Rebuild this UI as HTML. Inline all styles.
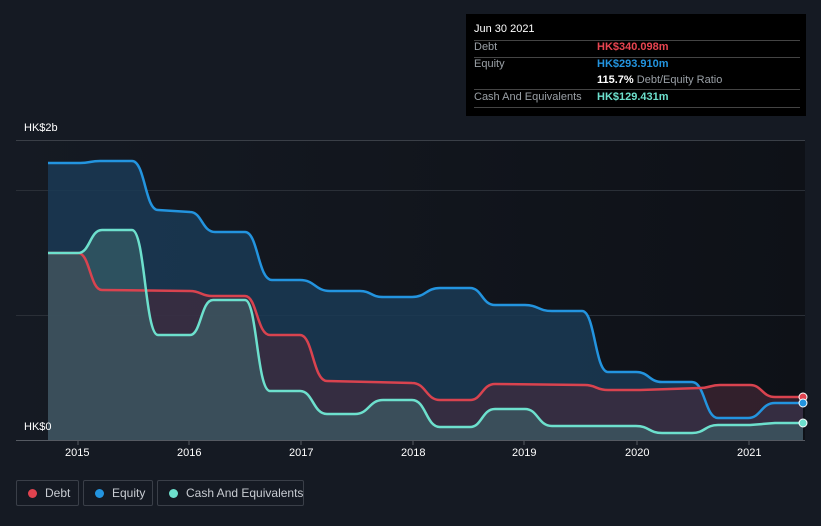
<!DOCTYPE html>
<html><head><meta charset="utf-8"><style>
body{margin:0;width:821px;height:526px;background:#151a23;font-family:"Liberation Sans",sans-serif;overflow:hidden;position:relative}
.t{position:absolute;color:#fff;font-size:11px}
.tip{position:absolute;left:466px;top:14px;width:340px;height:102px;background:#000}
.tip div{position:absolute;font-size:11px;white-space:nowrap}
.hr{position:absolute;left:8px;width:326px;height:1px;background:#444}
.lg{position:absolute;top:480px;height:26px;border:1px solid #3a3f48;border-radius:2px;box-sizing:border-box;color:#c8ccd2;font-size:12px;line-height:24px;white-space:nowrap}
.lg i{position:absolute;left:11px;top:8px;width:9px;height:9px;border-radius:50%}
.lg span{position:absolute;left:28px}
</style></head><body>
<svg width="821" height="526" style="position:absolute;left:0;top:0">
<defs><linearGradient id="bg" x1="0" y1="0" x2="1" y2="0"><stop offset="0" stop-color="#151a23"/><stop offset="1" stop-color="#0e1117"/></linearGradient></defs>
<rect x="16" y="140" width="789" height="300" fill="url(#bg)"/>
<line x1="16" y1="140.5" x2="805" y2="140.5" stroke="#3a3f47"/>
<line x1="16" y1="190.5" x2="805" y2="190.5" stroke="#2a2f37"/>
<line x1="16" y1="315.5" x2="805" y2="315.5" stroke="#2a2f37"/>
<path fill="#1a3a55" fill-opacity="0.85" d="M48,163 L80,163 C90,163 90,161 100,161 L132,161 C145,161 145,210 158,210 L190,212 C202,212 202,232 215,232 L245,232 C258,232 258,280 272,280 L300,280 C315,280 315,291 330,291 L360,291 C371,291 371,297 383,297 L412,297 C426,297 426,288 440,288 L470,288 C482,288 482,305 495,305 L525,305 C538,305 538,311 552,311 L582,311 C595,311 595,372 608,372 L636,372 C649,372 649,382 662,382 L692,382 C705,382 705,418 718,418 L748,418 C761,418 761,403 775,403 L803,403 L803,440 L48,440 Z"/>
<path fill="#4a2a3a" fill-opacity="0.6" d="M48,253 L78,253 C90,253 90,290 102,290 L190,291 C201,291 201,296 212,296 L245,296 C257,296 257,335 270,335 L300,335 C313,335 313,381 327,381 L412,383 C426,383 426,400 440,400 L470,400 C482,400 482,384 495,384 L585,385 C596,385 596,390 608,390 L640,390 L700,388 C710,388 710,385 720,385 L750,385 C762,385 762,397 775,397 L803,397 L803,440 L48,440 Z"/>
<path fill="#3e6a70" fill-opacity="0.55" d="M48,253 L78,253 C90,253 90,230 102,230 L132,230 C145,230 145,335 158,335 L190,335 C201,335 201,300 213,300 L245,300 C257,300 257,391 270,391 L300,391 C313,391 313,414 327,414 L355,414 C369,414 369,400 383,400 L412,400 C426,400 426,427 440,427 L470,427 C482,427 482,409 495,409 L525,409 C538,409 538,426 552,426 L636,426 C649,426 649,433 662,433 L692,433 C705,433 705,425 718,425 L750,425 L775,423 L803,423 L803,440 L48,440 Z"/>
<g fill="none" stroke-width="2.5" stroke-linejoin="round">
<path stroke="#2394df" d="M48,163 L80,163 C90,163 90,161 100,161 L132,161 C145,161 145,210 158,210 L190,212 C202,212 202,232 215,232 L245,232 C258,232 258,280 272,280 L300,280 C315,280 315,291 330,291 L360,291 C371,291 371,297 383,297 L412,297 C426,297 426,288 440,288 L470,288 C482,288 482,305 495,305 L525,305 C538,305 538,311 552,311 L582,311 C595,311 595,372 608,372 L636,372 C649,372 649,382 662,382 L692,382 C705,382 705,418 718,418 L748,418 C761,418 761,403 775,403 L803,403"/>
<path stroke="#d9434f" d="M48,253 L78,253 C90,253 90,290 102,290 L190,291 C201,291 201,296 212,296 L245,296 C257,296 257,335 270,335 L300,335 C313,335 313,381 327,381 L412,383 C426,383 426,400 440,400 L470,400 C482,400 482,384 495,384 L585,385 C596,385 596,390 608,390 L640,390 L700,388 C710,388 710,385 720,385 L750,385 C762,385 762,397 775,397 L803,397"/>
<path stroke="#6de0cd" d="M48,253 L78,253 C90,253 90,230 102,230 L132,230 C145,230 145,335 158,335 L190,335 C201,335 201,300 213,300 L245,300 C257,300 257,391 270,391 L300,391 C313,391 313,414 327,414 L355,414 C369,414 369,400 383,400 L412,400 C426,400 426,427 440,427 L470,427 C482,427 482,409 495,409 L525,409 C538,409 538,426 552,426 L636,426 C649,426 649,433 662,433 L692,433 C705,433 705,425 718,425 L750,425 L775,423 L803,423"/>
</g>
<circle cx="803" cy="397" r="4" fill="#e0434f" stroke="#fff" stroke-width="1"/>
<circle cx="803" cy="403" r="4" fill="#2394df" stroke="#fff" stroke-width="1"/>
<circle cx="803" cy="423" r="4" fill="#6de0cd" stroke="#fff" stroke-width="1"/>
<line x1="16" y1="440.5" x2="805" y2="440.5" stroke="#555a62"/>
<g stroke="#555a62"><line x1="78" y1="440" x2="78" y2="445"/><line x1="189" y1="440" x2="189" y2="445"/><line x1="301" y1="440" x2="301" y2="445"/><line x1="413" y1="440" x2="413" y2="445"/><line x1="524" y1="440" x2="524" y2="445"/><line x1="637" y1="440" x2="637" y2="445"/><line x1="749" y1="440" x2="749" y2="445"/></g>
</svg>
<div class="t" style="left:24px;top:122px">HK$2b</div>
<div class="t" style="left:24px;top:421px">HK$0</div>
<div class="t" style="left:65px;top:447px">2015</div>
<div class="t" style="left:177px;top:447px">2016</div>
<div class="t" style="left:289px;top:447px">2017</div>
<div class="t" style="left:401px;top:447px">2018</div>
<div class="t" style="left:512px;top:447px">2019</div>
<div class="t" style="left:625px;top:447px">2020</div>
<div class="t" style="left:737px;top:447px">2021</div>
<div class="tip">
<div style="left:8px;top:9px;color:#fff">Jun 30 2021</div>
<div class="hr" style="top:26px"></div>
<div style="left:8px;top:27px;color:#9aa0a6">Debt</div>
<div style="left:131px;top:27px;color:#e84550;font-weight:bold">HK$340.098m</div>
<div class="hr" style="top:43px"></div>
<div style="left:8px;top:44px;color:#9aa0a6">Equity</div>
<div style="left:131px;top:44px;color:#2394df;font-weight:bold">HK$293.910m</div>
<div style="left:131px;top:60px;color:#fff"><b>115.7%</b> <span style="color:#9aa0a6">Debt/Equity Ratio</span></div>
<div class="hr" style="top:75px"></div>
<div style="left:8px;top:77px;color:#9aa0a6">Cash And Equivalents</div>
<div style="left:131px;top:77px;color:#6de0cd;font-weight:bold">HK$129.431m</div>
<div class="hr" style="top:93px"></div>
</div>
<div class="lg" style="left:16px;width:63px"><i style="background:#e0434f"></i><span>Debt</span></div>
<div class="lg" style="left:83px;width:70px"><i style="background:#2394df"></i><span>Equity</span></div>
<div class="lg" style="left:157px;width:147px"><i style="background:#6de0cd"></i><span>Cash And Equivalents</span></div>
</body></html>
